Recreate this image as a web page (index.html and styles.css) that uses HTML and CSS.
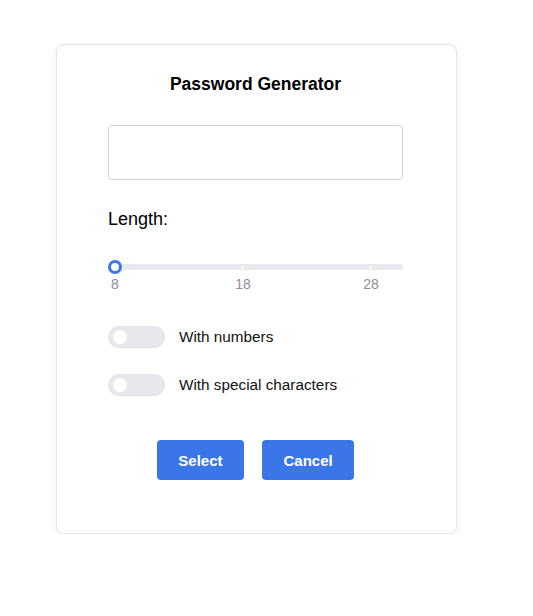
FILE: index.html
```html
<!DOCTYPE html>
<html>
<head>
<meta charset="utf-8">
<link rel="stylesheet" href="styles.css">
</head>
<body>
<div class="page">
  <div class="card">
    <h1 class="title">Password Generator</h1>
    <div class="output"></div>
    <div class="label">Length:</div>
    <div class="slider">
      <div class="track">
        <span class="dot d2"></span>
        <span class="dot d3"></span>
        <span class="thumb"></span>
      </div>
      <div class="marks">
        <span class="mark m1">8</span>
        <span class="mark m2">18</span>
        <span class="mark m3">28</span>
      </div>
    </div>
    <div class="options">
      <label class="opt"><span class="switch"><span class="knob"></span></span><span class="opt-text">With numbers</span></label>
      <label class="opt"><span class="switch"><span class="knob"></span></span><span class="opt-text">With special characters</span></label>
    </div>
    <div class="actions">
      <button class="btn">Select</button>
      <button class="btn">Cancel</button>
    </div>
  </div>
</div>
</body>
</html>
```
FILE: styles.css
```css
html, body {
  margin: 0;
  padding: 0;
  background: #ffffff;
  font-family: "Liberation Sans", Arial, sans-serif;
}
.page {
  padding: 44px 0 0 56px;
}
.card {
  box-sizing: border-box;
  width: 401px;
  height: 490px;
  border: 1px solid #e3e4e8;
  border-radius: 8px;
  background: #fff;
  box-shadow: 0 2px 8px rgba(0,0,0,0.06);
  padding: 29px 53px 0 51px;
}
.title {
  margin: 0;
  text-align: center;
  font-size: 17.5px;
  font-weight: bold;
  color: #000;
  line-height: 20px;
}
.output {
  margin-top: 31px;
  height: 55px;
  box-sizing: border-box;
  border: 1px solid #cfd2d8;
  border-radius: 4px;
}
.label {
  margin-top: 28px;
  font-size: 18px;
  line-height: 22px;
  color: #000;
}
.slider {
  margin-top: 34px;
}
.track {
  position: relative;
  height: 6px;
  border-radius: 3px;
  background: #e7e9ec;
}
.dot {
  position: absolute;
  top: 2px;
  width: 3px;
  height: 3px;
  border-radius: 50%;
  background: #fff;
}
.d2 { left: 133px; }
.d3 { left: 261px; }
.thumb {
  position: absolute;
  left: 0;
  top: -4px;
  width: 8px;
  height: 8px;
  border: 3px solid #3b76e8;
  border-radius: 50%;
  background: #fff;
}
.marks {
  position: relative;
  height: 20px;
  margin-top: 6px;
  font-size: 14px;
  color: #8c8f96;
}
.mark {
  position: absolute;
  top: 0;
  transform: translateX(-50%);
}
.m1 { left: 7px; }
.m2 { left: 135px; }
.m3 { left: 263px; }
.options {
  margin-top: 30px;
  display: flex;
  flex-direction: column;
  gap: 26px;
}
.opt {
  display: flex;
  align-items: center;
  gap: 14px;
  font-size: 15.3px;
  color: #111;
}
.switch {
  box-sizing: border-box;
  width: 57px;
  height: 22px;
  border-radius: 11px;
  background: #e6e8eb;
  border: 1px solid #e0e2e6;
  padding: 3px 4px;
  display: flex;
  align-items: center;
}
.knob {
  width: 14px;
  height: 14px;
  border-radius: 50%;
  background: #fff;
}
.actions {
  margin-top: 44px;
  display: flex;
  justify-content: center;
  gap: 18px;
}
.btn {
  height: 40px;
  padding: 0 21.5px;
  border: none;
  border-radius: 4px;
  background: #3b76e8;
  color: #fff;
  font-family: "Liberation Sans", Arial, sans-serif;
  font-size: 15px;
  font-weight: bold;
}
```
